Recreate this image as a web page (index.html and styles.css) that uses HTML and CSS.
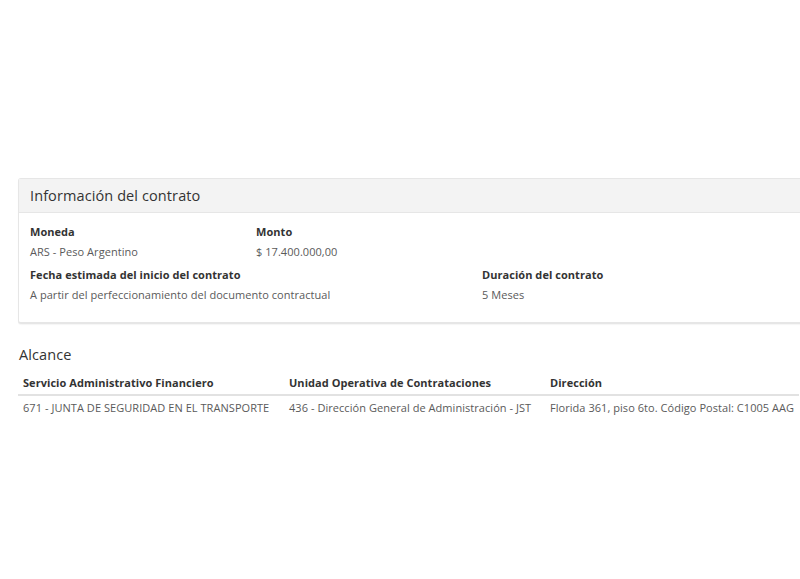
FILE: index.html
```html
<!DOCTYPE html>
<html lang="es">
<head>
<meta charset="utf-8">
<title>Información del contrato</title>
<link rel="stylesheet" href="styles.css">
</head>
<body>
<main class="page">
  <section class="panel">
    <header class="panel-heading">Información del contrato</header>
    <div class="panel-body">
      <div class="field-row">
        <div class="field col-1">
          <div class="field-label">Moneda</div>
          <div class="field-value">ARS - Peso Argentino</div>
        </div>
        <div class="field col-1">
          <div class="field-label">Monto</div>
          <div class="field-value">$ 17.400.000,00</div>
        </div>
      </div>
      <div class="field-row">
        <div class="field col-2">
          <div class="field-label">Fecha estimada del inicio del contrato</div>
          <div class="field-value">A partir del perfeccionamiento del documento contractual</div>
        </div>
        <div class="field col-1">
          <div class="field-label">Duración del contrato</div>
          <div class="field-value">5 Meses</div>
        </div>
      </div>
    </div>
  </section>

  <section class="scope">
    <h2 class="scope-title">Alcance</h2>
    <table class="scope-table">
      <thead>
        <tr>
          <th class="c1">Servicio Administrativo Financiero</th>
          <th class="c2">Unidad Operativa de Contrataciones</th>
          <th class="c3">Dirección</th>
        </tr>
      </thead>
      <tbody>
        <tr>
          <td>671 - JUNTA DE SEGURIDAD EN EL TRANSPORTE</td>
          <td>436 - Dirección General de Administración - JST</td>
          <td>Florida 361, piso 6to. Código Postal: C1005 AAG</td>
        </tr>
      </tbody>
    </table>
  </section>
</main>
</body>
</html>
```

FILE: styles.css
```css
html, body {
  margin: 0;
  padding: 0;
  background: #ffffff;
  overflow: hidden;
}

body {
  font-family: "Open Sans", "Liberation Sans", sans-serif;
  font-size: 11px;
  letter-spacing: 0.05px;
  color: #555555;
}

.page {
  padding: 178px 0 0 18px;
  width: 840px;
}

/* contract information card */
.panel {
  border: 1px solid #e6e6e6;
  border-bottom-width: 2px;
  border-radius: 3px;
  background: #ffffff;
  box-shadow: 0 1px 1px rgba(0, 0, 0, 0.04);
}

.panel-heading {
  height: 33px;
  line-height: 33px;
  padding: 0 11px;
  background: #f3f3f3;
  border-bottom: 1px solid #e6e6e6;
  font-size: 14.5px;
  letter-spacing: 0.1px;
  color: #333333;
}

.panel-body {
  padding: 9px 11px 17px;
  display: flex;
  flex-direction: column;
  gap: 3px;
}

.field-row {
  display: flex;
}

.field.col-1 {
  width: 226px;
}

.field.col-2 {
  width: 452px;
}

.field-label {
  font-weight: 700;
  color: #333333;
  line-height: 20px;
}

.field-value {
  line-height: 20px;
  color: #5a5a5a;
}

/* scope table */
.scope {
  padding-top: 21px;
}

.scope-title {
  margin: 0 0 5px 1px;
  font-size: 14.5px;
  font-weight: 400;
  letter-spacing: 0.1px;
  line-height: 20px;
  color: #333333;
}

.scope-table {
  border-collapse: collapse;
}

.scope-table th,
.scope-table td {
  text-align: left;
  padding: 0 5px;
  white-space: nowrap;
}

.scope-table th {
  font-weight: 700;
  color: #333333;
  height: 24px;
  vertical-align: middle;
  border-bottom: 2px solid #e2e2e2;
}

.scope-table td {
  height: 23px;
  padding-bottom: 2px;
  color: #5a5a5a;
}

.scope-table .c1 { width: 256px; }
.scope-table .c2 { width: 251px; }
```
